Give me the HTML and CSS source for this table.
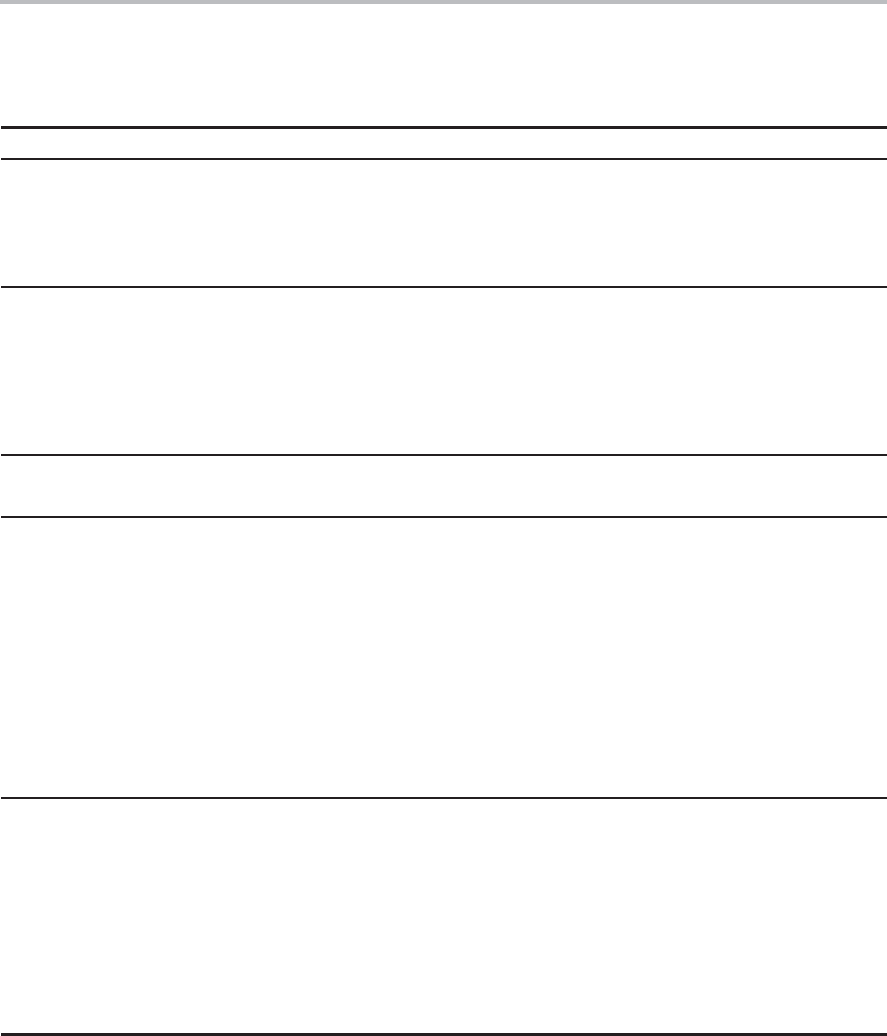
FILE: index.html
```html
<!DOCTYPE html>
<html lang="en">
<head>
<meta charset="utf-8">
<title>Table</title>
<link rel="stylesheet" href="styles.css">
</head>
<body>
<div class="topbar"></div>
<main class="page">
  <section class="table">
    <div class="thead"></div>
    <div class="row r1"></div>
    <div class="row r2"></div>
    <div class="row r3"></div>
    <div class="row r4"></div>
    <div class="row r5 last"></div>
  </section>
</main>
</body>
</html>
```
FILE: styles.css
```css
html, body {
  margin: 0;
  padding: 0;
  background: #ffffff;
  font-family: "Liberation Sans", Arial, sans-serif;
}
.topbar {
  height: 4px;
  background: #bcbdc0;
}
.page {
  padding: 122px 0 0 1px;
}
.table {
  display: flex;
  flex-direction: column;
  width: 886px;
  border-top: 3px solid #231f20;
}
.thead {
  height: 29px;
  border-bottom: 2px solid #231f20;
}
.row {
  border-bottom: 2px solid #231f20;
}
.r1 { height: 126px; }
.r2 { height: 166px; }
.r3 { height: 60px; }
.r4 { height: 279px; }
.r5 { height: 234px; }
.row.last {
  border-bottom: 3px solid #231f20;
}
```
